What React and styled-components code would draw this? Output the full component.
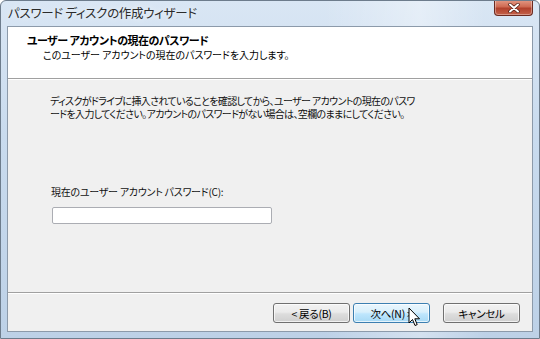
import React from "react";
import styled, { createGlobalStyle } from "styled-components";

const Global = createGlobalStyle`
  html, body { margin: 0; padding: 0; background: #ffffff; }
  body { font-family: "Noto Sans CJK JP", "Noto Sans", sans-serif; }
  * { box-sizing: border-box; }
`;

const Window = styled.div`
  position: relative;
  width: 540px;
  height: 339px;
  display: flex;
  flex-direction: column;
  background:
    linear-gradient(90deg, rgba(255,255,255,0) 60%, rgba(255,255,255,0.35) 78%, rgba(255,255,255,0) 90%),
    linear-gradient(180deg, #d9e6f4 0%, #c9dbee 40%, #bdd1e7 100%);
  border: 1px solid #6d7c8c;
  border-radius: 6px 6px 0 0;
  overflow: hidden;
  font-feature-settings: "palt";
`;

const TitleBar = styled.div`
  height: 25px;
  display: flex;
  align-items: flex-start;
  justify-content: space-between;
  padding-left: 7px;
  padding-right: 6px;
`;

const Title = styled.div`
  margin-top: 4px;
  font-size: 12.5px;
  line-height: 16px;
  color: #2b2b2b;
  letter-spacing: -0.3px;
  text-shadow: 0 0 6px rgba(255,255,255,0.9);
`;

const CloseButton = styled.div`
  width: 39px;
  height: 16px;
  margin-top: -1px;
  border: 1px solid #6b2a20;
  border-top: none;
  border-radius: 0 0 4px 4px;
  background: linear-gradient(180deg, #e39a86 0%, #cf6a52 45%, #b1412c 55%, #c4614a 100%);
  box-shadow: inset 0 0 0 1px rgba(255,255,255,0.35);
  display: flex;
  align-items: center;
  justify-content: center;
`;

const Client = styled.div`
  flex: 1;
  margin: 0 6px 6px 6px;
  border: 1px solid #8c9aaa;
  display: flex;
  flex-direction: column;
  background: #f0f0f0;
`;

const Header = styled.div`
  height: 52px;
  background: #ffffff;
  border-bottom: 1px solid #a0a0a0;
  padding: 6px 0 0 19px;
  color: #000;
`;

const HeaderTitle = styled.div`
  font-size: 11px;
  line-height: 15px;
  font-weight: 700;
  letter-spacing: -0.5px;
`;

const HeaderSub = styled.div`
  font-size: 10px;
  line-height: 13px;
  padding-left: 16px;
  letter-spacing: -0.05px;
`;

const Body = styled.div`
  flex: 1;
  border-top: 1px solid #ffffff;
  padding: 15px 0 0 42px;
  color: #111;
  font-size: 10px;
`;

const Para = styled.div`
  line-height: 12.5px;
  letter-spacing: -0.65px;
`;

const Line = styled.div`
  white-space: nowrap;
`;

const Label = styled.div`
  margin-top: 66px;
  line-height: 12px;
  letter-spacing: -0.25px;
  margin-left: 1px;
`;

const Input = styled.div`
  margin-top: 9px;
  margin-left: 2px;
  width: 220px;
  height: 17px;
  background: #ffffff;
  border: 1px solid #abadb3;
  border-radius: 2px;
`;

const Separator = styled.div`
  height: 2px;
  border-top: 1px solid #a0a0a0;
  border-bottom: 1px solid #ffffff;
`;

const Footer = styled.div`
  height: 37px;
  display: flex;
  justify-content: flex-end;
  align-items: flex-start;
  padding: 9px 12px 0 0;
`;

const Button = styled.div`
  width: 77px;
  height: 20px;
  margin-left: ${p => p.$gap}px;
  border: 1px solid ${p => (p.$active ? "#3c7fb1" : "#707070")};
  border-radius: 3px;
  background: ${p =>
    p.$active
      ? "linear-gradient(180deg, #eaf6fd 0%, #d9f0fc 45%, #bee6fd 55%, #a7d9f5 100%)"
      : "linear-gradient(180deg, #f2f2f2 0%, #ebebeb 45%, #dddddd 55%, #cfcfcf 100%)"};
  box-shadow: inset 0 0 0 1px rgba(255,255,255,0.7);
  display: flex;
  align-items: center;
  justify-content: center;
  font-size: 10.5px;
  color: #000;
  letter-spacing: -0.3px;
`;

const Cursor = styled.svg`
  position: absolute;
  left: 407px;
  top: 306px;
`;

export default function App() {
  return (
    <>
      <Global />
      <Window>
        <TitleBar>
          <Title>パスワード ディスクの作成ウィザード</Title>
          <CloseButton>
            <svg width="12" height="10" viewBox="0 0 12 10">
              <path d="M2 1.5 L10 8.5 M10 1.5 L2 8.5" stroke="#4a1a12" strokeWidth="3.4" strokeLinecap="round" />
              <path d="M2 1.5 L10 8.5 M10 1.5 L2 8.5" stroke="#ffffff" strokeWidth="2" strokeLinecap="round" />
            </svg>
          </CloseButton>
        </TitleBar>
        <Client>
          <Header>
            <HeaderTitle>ユーザー アカウントの現在のパスワード</HeaderTitle>
            <HeaderSub>このユーザー アカウントの現在のパスワードを入力します。</HeaderSub>
          </Header>
          <Body>
            <Para>
              <Line>ディスクがドライブに挿入されていることを確認してから、ユーザー アカウントの現在のパスワ</Line>
              <Line>ードを入力してください。アカウントのパスワードがない場合は、空欄のままにしてください。</Line>
            </Para>
            <Label>現在のユーザー アカウント パスワード(C):</Label>
            <Input />
          </Body>
          <Separator />
          <Footer>
            <Button $gap={0}>&lt; 戻る(B)</Button>
            <Button $gap={3} $active>次へ(N) &gt;</Button>
            <Button $gap={13}>キャンセル</Button>
          </Footer>
        </Client>
        <Cursor width="14" height="22" viewBox="0 0 14 22">
          <path d="M1 1 L1 16 L4.5 12.5 L7 18.5 L9.2 17.6 L6.8 11.8 L11.5 11.8 Z" fill="#ffffff" stroke="#000000" strokeWidth="1" strokeLinejoin="round" />
        </Cursor>
      </Window>
    </>
  );
}
